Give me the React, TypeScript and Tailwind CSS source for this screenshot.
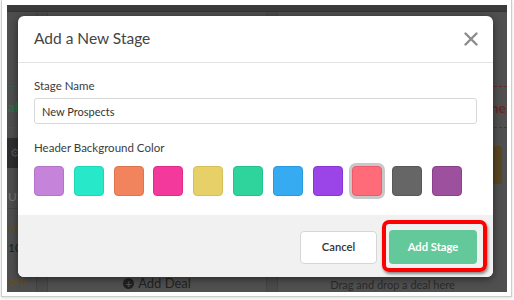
import React from "react"

const swatches = [
    "bg-[#c584d9] border-[#b673cb]",
    "bg-[#27e8c9] border-[#1fd6b8]",
    "bg-[#f2845d] border-[#e2744d]",
    "bg-[#f33a9c] border-[#e02b8b]",
    "bg-[#e7d067] border-[#d8c057]",
    "bg-[#2fd39c] border-[#22c28c]",
    "bg-[#36abf1] border-[#2799e0]",
    "bg-[#9b45e8] border-[#8a35d6]",
    "bg-[#ff6b78] border-[#ef5a68]",
    "bg-[#666666] border-[#585858]",
    "bg-[#9d509d] border-[#8c418c]",
]

function BoardBehind() {
    return (
        <div className="flex flex-col h-full">
            <div className="h-[15px] bg-[#3b3b3b] border-b border-[#333]" />
            <div className="flex flex-1 gap-[10px]">
                {/* left column, only a sliver shows beside the modal */}
                <div className="w-[30px] flex flex-col overflow-hidden bg-[#4e4e4e] border-r border-[#444] text-[12px] leading-[16px]">
                    <div className="h-[74px] shrink-0" />
                    <div className="h-[42px] shrink-0 border-t border-b border-dashed border-[#2d6a45] flex items-center pl-[1px] text-[14px] font-bold text-[#2c7048]">
                        al
                    </div>
                    <div className="h-[10px] shrink-0" />
                    <div className="h-[30px] shrink-0 bg-[#2e2e2e] flex items-center pl-[3px]">
                        <span className="text-[12px] leading-none text-[#555]">⚙</span>
                    </div>
                    <div className="h-[41px] shrink-0 pt-[18px] border-b border-[#444] flex items-center pl-[1px] text-[#777]">US</div>
                    <div className="h-[20px] shrink-0 mt-[9px] flex items-center pl-[1px] text-[#6b4a22]">as</div>
                    <div className="h-[20px] shrink-0 flex items-center pl-[1px] text-[#1e1e1e]">10</div>
                    <div className="h-[14px] shrink-0" />
                    <div className="h-[20px] shrink-0 flex items-center pl-[1px] text-[#6b4a22]">ack</div>
                </div>
                <div className="w-[220px] flex flex-col bg-[#505050] border-l border-r border-[#444]">
                    <div className="flex-1" />
                    <div className="h-[17px] flex items-start justify-center gap-[4px] text-[13px] text-[#222] leading-[17px]">
                        <span className="w-[11px] h-[11px] rounded-full bg-[#222] text-[#505050] text-[11px] leading-[11px] font-bold flex items-center justify-center mt-[3px]">+</span>
                        Add Deal
                    </div>
                </div>
                <div className="w-[230px] flex flex-col overflow-hidden bg-[#505050] border-l border-[#444]">
                    <div className="h-[74px]" />
                    <div className="h-[42px] border-t border-b border-dashed border-[#6a2a2a] flex items-center justify-end pr-[1px] text-[14px] font-bold text-[#6e2525]">
                        he
                    </div>
                    <div className="h-[18px]" />
                    <div className="flex justify-end pr-[5px]">
                        <div className="w-[60px] h-[38px] rounded-[3px] bg-[#5a4722]" />
                    </div>
                    <div className="flex-1" />
                    <div className="h-[15px] text-center text-[11px] text-[#2a2a2a] leading-[15px]">
                        Drag and drop a deal here
                    </div>
                </div>
            </div>
        </div>
    )
}

export default function App() {
    return (
        <div className="w-[514px] h-[300px] bg-white overflow-hidden font-['Lato',sans-serif]">
            <div className="ml-[1px] w-[511px] h-[297px] border-l border-r border-b border-[#cdcdcd] pl-[5px] pr-[4px] pt-[5px] pb-[4px] shadow-[0_1px_3px_rgba(0,0,0,0.15)]">
                <div className="relative w-[500px] h-[287px] bg-[#4b4b4b] overflow-hidden">
                    <BoardBehind />

                    <div className="absolute left-[11px] top-[11px] w-[475px] h-[261px] bg-white rounded-[6px] shadow-[0_2px_8px_rgba(0,0,0,0.5)] flex flex-col">
                        <div className="h-[47px] px-[16px] flex items-center justify-between border-b border-[#e4e4e4]">
                            <h1 className="text-[15.5px] text-[#444]">Add a New Stage</h1>
                            <svg width="14" height="14" viewBox="0 0 14 14" className="mr-[-1px]">
                                <path d="M1.5 1.5 L12.5 12.5 M12.5 1.5 L1.5 12.5" stroke="#8c8c8c" strokeWidth="2.4" strokeLinecap="round" />
                            </svg>
                        </div>

                        <div className="px-[16px] pt-[14px] pb-[19px]">
                            <label className="block text-[11.5px] leading-[18px] text-[#3c3c3c]">Stage Name</label>
                            <input
                                className="mt-[3px] w-full h-[26px] border border-[#d8d8d8] rounded-[3px] px-[7px] text-[11px] text-[#333] outline-none"
                                value="New Prospects"
                                readOnly
                            />
                            <label className="block mt-[15px] text-[11.5px] leading-[18px] text-[#3c3c3c]">Header Background Color</label>
                            <div className="mt-[9px] flex gap-[9.8px]">
                                {swatches.map((s, i) => (
                                    <div
                                        key={i}
                                        className={
                                            "w-[30px] h-[30px] rounded-[4px] border " +
                                            s +
                                            (i === 8 ? " ring-[3px] ring-[#c8c8c8]" : "")
                                        }
                                    />
                                ))}
                            </div>
                        </div>

                        <div className="flex-1 bg-[#f1f1f1] rounded-b-[6px] flex justify-end items-start pt-[15px] pr-[16px] gap-[12px]">
                            <button className="mt-[1px] w-[77px] h-[33px] bg-white border border-[#d6d6d6] rounded-[4px] text-[11.2px] font-semibold text-[#333]">
                                Cancel
                            </button>
                            <div className="relative">
                                <button className="w-[88px] h-[34px] bg-[#63c99b] rounded-[4px] text-[11.2px] font-bold text-white">
                                    Add Stage
                                </button>
                                <div className="absolute -left-[7px] -top-[10px] -right-[10px] -bottom-[8px] border-[4px] border-[#f00] rounded-[7px] shadow-[1px_2px_3px_rgba(0,0,0,0.45)]" />
                            </div>
                        </div>
                    </div>
                </div>
            </div>
        </div>
    )
}
